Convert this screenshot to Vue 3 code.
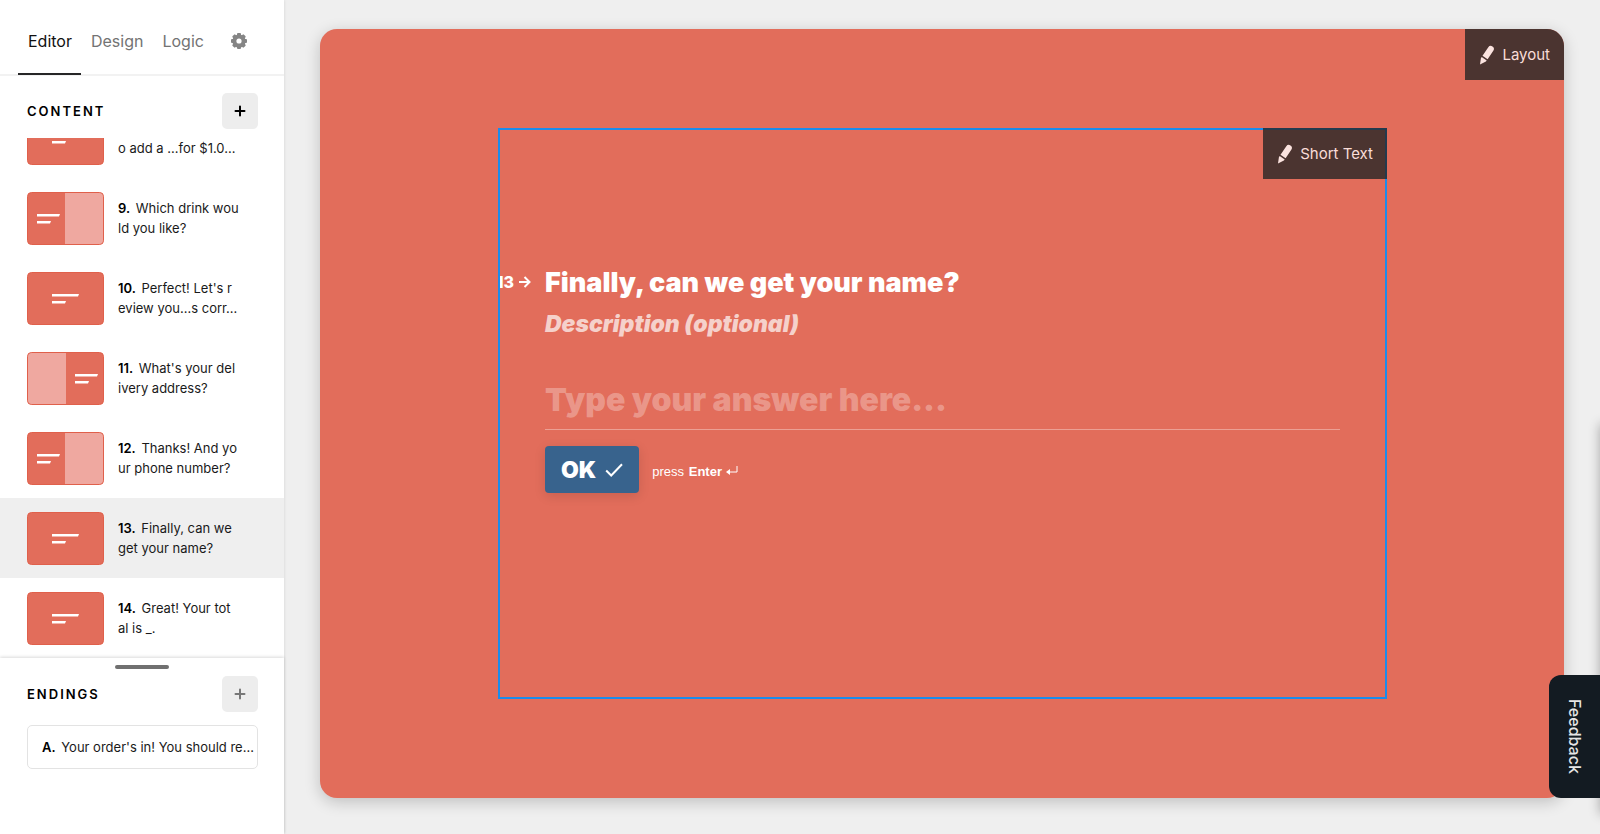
<template>
  <div class="app">
    <aside class="sidebar">
      <nav class="tabs">
        <a
          v-for="tab in tabs"
          :key="tab"
          href="#"
          :class="['tab', { active: activeTab === tab }]"
          @click.prevent="activeTab = tab"
        >{{ tab }}</a>
        <button class="btn-settings" aria-label="Settings">
          <svg width="16" height="16" viewBox="0 0 16 16">
            <g fill="#858585">
              <rect
                v-for="angle in [0, 45, 90, 135]"
                :key="angle"
                x="6"
                y="0"
                width="4"
                height="16"
                rx="1"
                :transform="`rotate(${angle} 8 8)`"
              />
              <circle cx="8" cy="8" r="6.6" />
            </g>
            <circle cx="8" cy="8" r="2.6" fill="#fff" />
          </svg>
        </button>
      </nav>

      <div class="section-header content-header">
        <h2 class="section-title">Content</h2>
        <button class="btn-add" aria-label="Add content">
          <svg width="12" height="12" viewBox="0 0 12 12">
            <path d="M6 1.5v9M1.5 6h9" />
          </svg>
        </button>
      </div>

      <ul class="questions">
        <li
          v-for="question in questions"
          :key="question.id"
          :class="['question', { selected: selectedId === question.id }]"
          @click="selectedId = question.id"
        >
          <svg class="thumb" width="77" height="53" viewBox="0 0 77 53">
            <rect x="0.5" y="0.5" width="76" height="52" rx="4" fill="#e26d5b" stroke="#e0604b" />
            <path v-if="question.layout === 'right'" d="M38 1h34a4 4 0 0 1 4 4v43a4 4 0 0 1-4 4H38z" fill="#efa8a0" />
            <path v-if="question.layout === 'left'" d="M39 1H5a4 4 0 0 0-4 4v43a4 4 0 0 0 4 4h34z" fill="#efa8a0" />
            <g fill="#fff" :transform="`translate(${thumbOffsets[question.layout]} 22)`">
              <path :d="question.layout === 'full' ? 'M0 0h27l-1 2.6H0z' : 'M0 0h23l-1 2.6H0z'" />
              <path d="M0 7h14l-1 2.4H0z" />
            </g>
          </svg>
          <div class="question-text">
            <div v-for="(line, index) in question.lines" :key="index" class="question-line">
              <b v-if="index === 0 && line">{{ question.id }}.</b> {{ line }}
            </div>
          </div>
        </li>
      </ul>

      <section class="endings">
        <div class="drag-handle"></div>
        <div class="section-header">
          <h2 class="section-title">Endings</h2>
          <button class="btn-add muted" aria-label="Add ending">
            <svg width="12" height="12" viewBox="0 0 12 12">
              <path d="M6 1.5v9M1.5 6h9" />
            </svg>
          </button>
        </div>
        <button class="ending"><b>A.</b> Your order's in! You should re...</button>
      </section>
    </aside>

    <main class="workspace">
      <div class="canvas">
        <button class="btn-edit">
          <svg width="16" height="20" viewBox="0 0 16 20">
            <path d="M9.3 2.3a3 3 0 0 1 5 3.4L8.6 14.2 3.5 10.8zM2.7 12l5 3.4-.8 1.1L1 19.5l.9-6.3z" />
          </svg>
          Layout
        </button>
        <div class="block">
          <button class="btn-edit">
            <svg width="16" height="20" viewBox="0 0 16 20">
              <path d="M9.3 2.3a3 3 0 0 1 5 3.4L8.6 14.2 3.5 10.8zM2.7 12l5 3.4-.8 1.1L1 19.5l.9-6.3z" />
            </svg>
            Short Text
          </button>
          <div class="title-row">
            <span class="number">
              13
              <svg width="12" height="12" viewBox="0 0 12 12">
                <path d="M0 6h10M5.5 1l5 5-5 5" />
              </svg>
            </span>
            <h1 class="title">Finally, can we get your name?</h1>
          </div>
          <p class="description">Description (optional)</p>
          <input v-model="answer" class="answer" type="text" aria-label="Answer" placeholder="Type your answer here..." />
          <div class="submit-row">
            <button class="btn-ok">
              OK
              <svg width="18" height="14" viewBox="0 0 18 14">
                <path d="M1.2 7.5l5 5L17 1.2" />
              </svg>
            </button>
            <span class="hint">
              press <b>Enter</b>
              <svg width="12" height="10" viewBox="0 0 12 10">
                <path d="M11 0v6H2" fill="none" stroke="#fff" />
                <path d="M0 6l4-3v6z" fill="#fff" />
              </svg>
            </span>
          </div>
        </div>
      </div>
    </main>

    <div class="drawer-edge"></div>
    <button class="btn-feedback">Feedback</button>
  </div>
</template>

<script setup>
import { ref } from 'vue'

const tabs = ['Editor', 'Design', 'Logic']
const activeTab = ref('Editor')
const selectedId = ref(13)
const answer = ref('')

// x of the text strokes inside a thumbnail
const thumbOffsets = { full: 25, right: 10, left: 48 }

const questions = [
  { id: 8, layout: 'full', lines: ['', 'o add a ...for $1.0...'] },
  { id: 9, layout: 'right', lines: ['Which drink wou', 'ld you like?'] },
  { id: 10, layout: 'full', lines: ["Perfect! Let's r", 'eview you...s corr...'] },
  { id: 11, layout: 'left', lines: ["What's your del", 'ivery address?'] },
  { id: 12, layout: 'right', lines: ['Thanks! And yo', 'ur phone number?'] },
  { id: 13, layout: 'full', lines: ['Finally, can we', 'get your name?'] },
  { id: 14, layout: 'full', lines: ['Great! Your tot', 'al is _.'] }
]
</script>

<style>
body {
  margin: 0;
}
</style>

<style scoped>
.app {
  display: flex;
  height: 100vh;
  overflow: hidden;
  background: #efefef;
  font-family: Inter, "Liberation Sans", sans-serif;
  color: #1a1a1a;
}

.app * {
  box-sizing: border-box;
}

button {
  border: none;
  padding: 0;
  font-family: inherit;
  cursor: pointer;
}

.sidebar {
  display: flex;
  flex-direction: column;
  flex: none;
  width: 284px;
  background: #fff;
  box-shadow: 0 0 3px rgba(0, 0, 0, 0.12);
}

.tabs {
  display: flex;
  flex: none;
  height: 76px;
  padding-left: 18px;
  border-bottom: 2px solid #f2f2f2;
}

.tab {
  height: 75px;
  padding: 0 9px 0 10px;
  line-height: 82px;
  font-size: 16px;
  color: #737373;
  text-decoration: none;
}

.tab.active {
  color: #111;
  border-bottom: 2px solid #262627;
}

.btn-settings {
  display: flex;
  align-items: center;
  margin-left: 18px;
  padding-top: 7px;
  background: none;
}

.section-header {
  display: flex;
  flex: none;
  justify-content: space-between;
  align-items: center;
  padding: 0 26px 0 27px;
}

.content-header {
  margin: 17px 0 9px;
}

.section-title {
  margin: 0;
  font-size: 13px;
  font-weight: 600;
  letter-spacing: 2px;
  text-transform: uppercase;
  color: #000;
}

.btn-add {
  display: flex;
  justify-content: center;
  align-items: center;
  width: 36px;
  height: 36px;
  border-radius: 5px;
  background: #ededed;
}

.btn-add path {
  fill: none;
  stroke: #000;
  stroke-width: 2;
  stroke-linecap: round;
}

.btn-add.muted path {
  stroke: #777;
}

.questions {
  display: flex;
  flex-direction: column;
  justify-content: flex-end;
  flex: 1;
  min-height: 0;
  margin: 0;
  padding: 0;
  overflow: hidden;
  list-style: none;
}

.question {
  display: flex;
  flex: none;
  align-items: center;
  gap: 14px;
  height: 80px;
  padding: 0 27px;
  cursor: pointer;
}

.question.selected {
  background: #efefef;
}

.thumb {
  flex: none;
}

.question-line {
  height: 20px;
  line-height: 20px;
  font-size: 13px;
  white-space: nowrap;
}

.question-line b,
.ending b {
  margin-right: 2px;
  font-weight: 600;
  color: #000;
}

.endings {
  flex: none;
  padding: 7px 0 65px;
  box-shadow: 0 -1px 3px rgba(0, 0, 0, 0.15);
}

.drag-handle {
  width: 54px;
  height: 4px;
  margin: 0 auto 7px;
  border-radius: 2px;
  background: #707070;
}

.ending {
  display: block;
  width: calc(100% - 53px);
  height: 44px;
  margin: 13px 26px 0 27px;
  padding: 0 0 0 14px;
  border: 1px solid #e3e3e3;
  border-radius: 5px;
  background: #fff;
  font-size: 13px;
  text-align: left;
  white-space: nowrap;
  color: #1a1a1a;
}

.workspace {
  display: flex;
  flex: 1;
  min-width: 0;
  padding: 29px 36px 36px;
}

.canvas {
  position: relative;
  display: flex;
  flex: 1;
  min-width: 0;
  padding: 99px 177px 99px 178px;
  border-radius: 17px;
  background: #e26d5b;
  box-shadow: 0 4px 16px rgba(0, 0, 0, 0.2);
}

.btn-edit {
  position: absolute;
  top: 0;
  right: 0;
  z-index: 1;
  display: flex;
  align-items: center;
  gap: 7px;
  height: 51px;
  padding: 0 14px;
  background: rgba(38, 38, 38, 0.8);
  font-size: 15px;
  color: #f9ddd8;
}

.btn-edit path {
  fill: #fbe3df;
}

.canvas > .btn-edit {
  border-top-right-radius: 17px;
}

.block {
  position: relative;
  flex: 1;
  min-width: 0;
  padding: 137px 47px 0;
  overflow: hidden;
  font-weight: 900;
  color: #fff;
}

.block::after {
  content: "";
  position: absolute;
  inset: 0;
  border: 2px solid #1a8cec;
  pointer-events: none;
}

.title-row {
  position: relative;
}

.number {
  position: absolute;
  right: 100%;
  display: flex;
  align-items: center;
  gap: 5px;
  margin-right: 14px;
  line-height: 34px;
  font-size: 16px;
  font-weight: 800;
}

.number path,
.btn-ok path {
  fill: none;
  stroke: #fff;
  stroke-width: 2;
}

.title {
  margin: 0;
  line-height: 36px;
  font-size: 27px;
  font-weight: 900;
}

.description {
  margin: 9px 0 0;
  line-height: 28px;
  font-size: 23px;
  font-style: italic;
  color: rgba(255, 255, 255, 0.7);
}

.answer {
  display: block;
  width: 100%;
  height: 56px;
  margin-top: 36px;
  padding: 0 0 4px;
  border: none;
  border-bottom: 1px solid rgba(255, 255, 255, 0.35);
  outline: none;
  background: transparent;
  font-family: inherit;
  font-size: 32px;
  font-weight: 900;
  color: #fff;
}

.answer::placeholder {
  color: rgba(255, 255, 255, 0.3);
  opacity: 1;
}

.submit-row {
  display: flex;
  align-items: center;
  gap: 13px;
  margin-top: 16px;
}

.btn-ok {
  display: flex;
  align-items: center;
  gap: 9px;
  height: 47px;
  padding: 0 16px;
  border-radius: 4px;
  background: #38638d;
  box-shadow: 0 3px 12px rgba(0, 0, 0, 0.12);
  font-size: 23px;
  font-weight: 900;
  color: #fff;
}

.hint {
  padding-top: 3px;
  font-family: "Liberation Sans", Arial, sans-serif;
  font-size: 13px;
  font-weight: 400;
}

.hint b {
  margin: 0 2px 0 1px;
}

.hint svg {
  margin-left: 2px;
}

.drawer-edge {
  position: fixed;
  top: 424px;
  bottom: 20px;
  left: 100%;
  width: 20px;
  box-shadow: 0 0 12px rgba(0, 0, 0, 0.3);
}

.btn-feedback {
  position: fixed;
  right: 0;
  bottom: 36px;
  z-index: 2;
  width: 51px;
  height: 123px;
  border-radius: 12px 0 0 12px;
  background: #131b22;
  writing-mode: vertical-rl;
  font-size: 16px;
  font-weight: 500;
  color: #e6e6e6;
}
</style>
